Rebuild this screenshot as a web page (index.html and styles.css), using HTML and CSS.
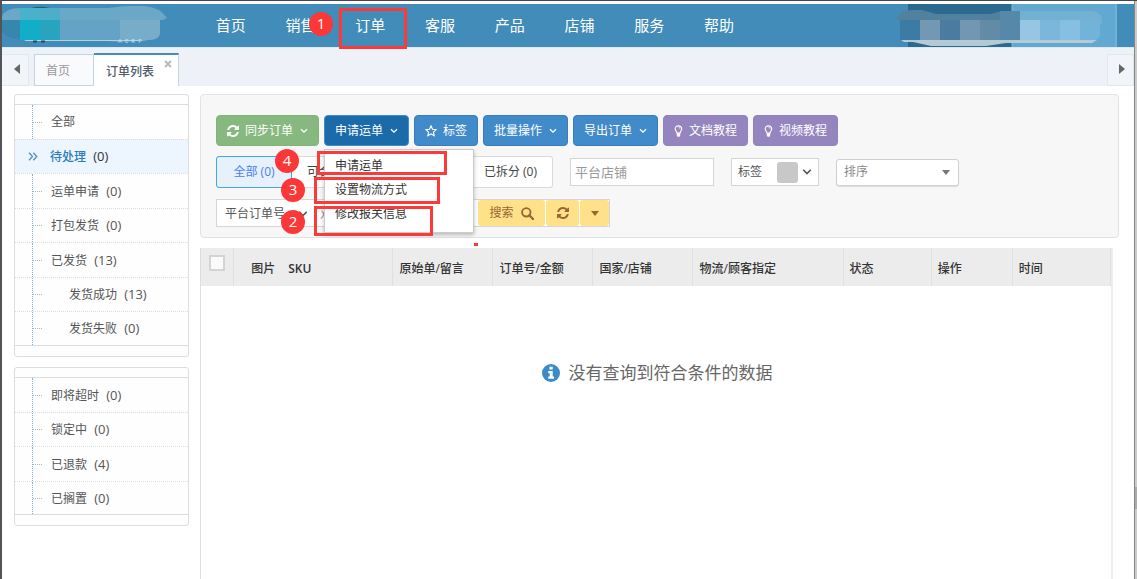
FILE: index.html
```html
<!DOCTYPE html>
<html lang="zh-CN">
<head>
<meta charset="utf-8">
<meta name="viewport" content="width=device-width, initial-scale=1">
<title>订单列表</title>
<link rel="stylesheet" href="styles.css">
</head>
<body>
<svg class="defs" aria-hidden="true">
  <symbol id="chevron" viewBox="0 0 8 6"><path d="M1 1.2 4 4.2 7 1.2" fill="none" stroke="currentColor" stroke-width="1.3"/></symbol>
  <symbol id="caret" viewBox="0 0 8 5"><path d="M0 0h8L4 5z" fill="currentColor"/></symbol>
  <symbol id="refresh" viewBox="0 0 1536 1536"><path fill="currentColor" d="M1511 928q0 5-1 7-64 268-268 434.500T764 1536q-146 0-282.500-55T238 1324l-129 129q-19 19-45 19t-45-19-19-45V960q0-26 19-45t45-19h448q26 0 45 19t19 45-19 45l-137 137q71 66 161 102t187 36q134 0 250-65t186-179q11-17 53-117 8-23 30-23h192q13 0 22.500 9.500t9.500 22.500zm25-800v448q0 26-19 45t-45 19h-448q-26 0-45-19t-19-45 19-45l138-138Q969 256 768 256q-134 0-250 65T332 500q-11 17-53 117-8 23-30 23H50q-13 0-22.500-9.500T18 608v-7q65-268 270-434.500T768 0q146 0 284 55.500T1297 212l130-129q19-19 45-19t45 19 19 45z"/></symbol>
  <symbol id="bulb" viewBox="0 0 10 14"><path d="M3.300 9.500C3.200 7.500 1.200 6.900 1.200 4.500a3.800 3.500 0 0 1 7.600 0c0 2.400-2 3-2.100 5z" fill="none" stroke="currentColor" stroke-width="1.300"/><path d="M3 9.500h4v3L6 13.700H4L3 12.500zM5 2.600c1.300 0 2 .7 2.200 1.700h-.8C6.200 3.700 5.800 3.300 5 3.300z" fill="currentColor"/></symbol>
</svg>
<div class="window">
  <header class="topbar">
    <svg class="brand" viewBox="0 0 168 43" role="img" aria-label="Logo">
      <path d="M26 5q10-4 22-1v2H26z" fill="#235d72"/>
      <path d="M0 12Q4 4 18 4h88Q125 1 142 2q16 1 23 12l-4 2H0z" fill="#6ba7c6"/>
      <path d="M0 16h20v20Q4 34 0 28z" fill="#3786ad"/>
      <path d="M18 4h20v32H18z" fill="#12aec9"/><path d="M38 4h20v32H38z" fill="#28a4bf"/>
      <path d="M18 4h40v12H18z" fill="#5cb1ca" opacity=".75"/>
      <path d="M58 16h60v20H58z" fill="#65a3c6"/><path d="M118 16h40v14q-1 6-12 6h-28z" fill="#78adc9"/>
      <path d="M22 36h124q-14 2-40 1H24z" fill="#b5d2e1"/>
      <path d="M31 37.500h4M39 37.500h4" stroke="#174f66" stroke-width="2"/>
      <text x="116" y="37.500" dy="1" class="brand-text">A  E  R  P</text>
    </svg>
    <nav class="mainnav">
      <a href="#">首页</a><a href="#">销售</a><a href="#">订单</a><a href="#">客服</a><a href="#">产品</a><a href="#">店铺</a><a href="#">服务</a><a href="#">帮助</a>
    </nav>
    <svg class="account" viewBox="0 0 238 43" aria-hidden="true">
      <path d="M12 0h104v43H12z" fill="#2b698f"/><path d="M116 0h105v43H116z" fill="#62a9d2"/>
      <path d="M116 0v43M220 0v43" stroke="#7fb9db"/>
      <path d="M0 16Q3 6 16 6h10l14 4h54l12-3h18v29H4V16z" fill="#52809f"/>
      <path d="M124 7h73q8 1 9 9v4h-82z" fill="#73b1d2"/>
      <path d="M4 16h20v20H4z" fill="#3c7ba3"/><path d="M24 16h20v20H24z" fill="#7298b4"/><path d="M44 16h20v20H44z" fill="#4b7b9f"/><path d="M64 16h20v20H64z" fill="#7397b2"/><path d="M84 16h20v20H84z" fill="#638ba5"/><path d="M104 7h20v29h-20z" fill="#5689a9"/>
      <path d="M124 16h20v20h-20z" fill="#97c6e5"/><path d="M144 16h20v20h-20z" fill="#7bb6db"/><path d="M164 16h20v20h-20z" fill="#87bfe2"/><path d="M184 16h20v14q-1 6-6 6h-14z" fill="#72b3d9"/>
      <path d="M5 36h196l-5 3h-86l-20 3H35l-18-4H8z" fill="#b3cad7"/>
    </svg>
  </header>
  <div class="tabs">
    <button class="scroller" aria-label="向左"><svg width="6" height="10" viewBox="0 0 6 10"><path d="M6 0v10L0 5z" fill="#666"/></svg></button>
    <a class="tab" href="#">首页</a>
    <a class="tab current" href="#">订单列表<svg class="close" viewBox="0 0 8 8"><path d="m1 1 6 6M7 1 1 7" stroke="#bbb" stroke-width="2"/></svg></a>
    <button class="scroller last" aria-label="向右"><svg width="6" height="10" viewBox="0 0 6 10"><path d="M0 0v10l6-5z" fill="#666"/></svg></button>
  </div>
  <div class="content">
    <aside class="sidebar">
      <ul class="tree">
        <li><a href="#">全部</a></li>
        <li class="selected"><svg class="angles" viewBox="0 0 10 9"><path d="m1 .7 3.500 3.800L1 8.300M5.300.7l3.500 3.800-3.500 3.800" fill="none" stroke="#5191bd" stroke-width="1.300"/></svg><a href="#"><b>待处理</b> <span>(0)</span></a></li>
        <li><a href="#">运单申请 <span>(0)</span></a></li>
        <li><a href="#">打包发货 <span>(0)</span></a></li>
        <li><a href="#">已发货 <span>(13)</span></a></li>
        <li class="child"><a href="#">发货成功 <span>(13)</span></a></li>
        <li class="child"><a href="#">发货失败 <span>(0)</span></a></li>
      </ul>
      <ul class="tree">
        <li><a href="#">即将超时 <span>(0)</span></a></li>
        <li><a href="#">锁定中 <span>(0)</span></a></li>
        <li><a href="#">已退款 <span>(4)</span></a></li>
        <li><a href="#">已搁置 <span>(0)</span></a></li>
      </ul>
    </aside>
    <main class="main">
      <section class="filters">
        <div class="actions">
          <button class="btn green"><svg class="i12"><use href="#refresh"/></svg>同步订单<svg class="chev"><use href="#chevron"/></svg></button>
          <div class="dropdown">
            <button class="btn pressed" aria-expanded="true">申请运单<svg class="chev"><use href="#chevron"/></svg></button>
            <ul class="menu"><li><a href="#">申请运单</a></li><li><a href="#">设置物流方式</a></li><li><a href="#">修改报关信息</a></li></ul>
          </div>
          <button class="btn"><svg class="i12" viewBox="0 0 14 14"><path d="m7 1 1.800 3.900 4.200.5-3.100 2.900.8 4.200L7 10.400l-3.700 2.100.8-4.200L1 5.400l4.200-.5z" fill="none" stroke="currentColor" stroke-width="1.300"/></svg>标签</button>
          <button class="btn">批量操作<svg class="chev"><use href="#chevron"/></svg></button>
          <button class="btn">导出订单<svg class="chev"><use href="#chevron"/></svg></button>
          <button class="btn purple"><svg class="bulb"><use href="#bulb"/></svg>文档教程</button>
          <button class="btn purple"><svg class="bulb"><use href="#bulb"/></svg>视频教程</button>
        </div>
        <div class="conditions">
          <div class="segments"><button class="on">全部 (0)</button><button class="wide">可合</button><button>已拆分 (0)</button></div>
          <input class="shop" type="text" placeholder="平台店铺" aria-label="平台店铺">
          <button class="tagpick">标签<span class="swatch"></span><svg class="chev big"><use href="#chevron"/></svg></button>
          <div class="sort"><select aria-label="排序"><option>排序</option></select><svg class="caret"><use href="#caret"/></svg></div>
        </div>
        <div class="search">
          <button class="field">平台订单号<svg class="chev big"><use href="#chevron"/></svg></button>
          <input type="text" placeholder="双" aria-label="平台订单号">
          <button class="yellow find">搜索<svg class="glass" viewBox="0 0 13 13"><circle cx="5.300" cy="5.300" r="4.200" fill="none" stroke="currentColor" stroke-width="1.900"/><path d="m8.300 8.300 3.700 3.700" stroke="currentColor" stroke-width="2.300" stroke-linecap="round"/></svg></button>
          <button class="yellow again" aria-label="刷新"><svg class="i12"><use href="#refresh"/></svg></button>
          <button class="yellow more" aria-label="更多"><svg class="caret"><use href="#caret"/></svg></button>
        </div>
      </section>
      <section class="results">
        <table>
          <colgroup><col class="c-check"><col class="c-sku"><col class="c-mid"><col class="c-mid"><col class="c-mid"><col class="c-ship"><col class="c-state"><col class="c-op"><col></colgroup>
          <thead><tr><th class="check"><input type="checkbox" aria-label="全选"></th><th class="sku"><span>图片</span><span>SKU</span></th><th>原始单/留言</th><th>订单号/金额</th><th>国家/店铺</th><th>物流/顾客指定</th><th>状态</th><th>操作</th><th>时间</th></tr></thead>
        </table>
        <p class="empty"><svg width="18" height="18" viewBox="0 0 18 18"><circle cx="9" cy="9" r="9" fill="#3b8bc8"/><path d="M7.400 2.800h3.300v2.700H7.400zM6.300 7.100h4.400v5.400H12v2.200H6.300v-2.200h1.400V9.300H6.300z" fill="#fff"/></svg>没有查询到符合条件的数据</p>
      </section>
    </main>
  </div>
</div>
<div class="edge"><div class="thumb"></div></div>
<div class="marks">
  <span class="box b1"></span><span class="num n1">1</span>
  <span class="box b4"></span><span class="num n4">4</span>
  <span class="box b3"></span><span class="num n3">3</span>
  <span class="box b2"></span><span class="num n2">2</span>
  <span class="speck"></span>
</div>
</body>
</html>
```

FILE: styles.css
```css
* { box-sizing: border-box; }
body {
  margin: 0;
  position: relative;
  display: flex;
  min-height: 100vh;
  border-left: 2px solid #545457;
  border-top: 1px solid #464450;
  background: #fff;
  color: #555;
  font: 12px/18px "Open Sans", "Noto Sans CJK SC", sans-serif;
}
button, input, select { font: inherit; color: inherit; margin: 0; }
button { cursor: pointer; }
a { color: inherit; text-decoration: none; }
ul { list-style: none; margin: 0; padding: 0; }
.defs { position: absolute; width: 0; height: 0; }
.window { flex: 1; display: flex; flex-direction: column; padding-top: 3px; min-width: 0; }
.edge { width: 3px; background: #cbcbcb; border-left: 1px solid #858585; padding-top: 486px; }
.thumb { height: 22px; background: #ababab; }

.topbar { display: flex; height: 43px; background: #418cb8; }
.brand { width: 168px; height: 43px; }
.brand-text { fill: #cfe4ef; font-size: 6px; white-space: pre; }
.mainnav { display: grid; grid-template-columns: repeat(8, 1fr); width: 558px; margin-left: 26px; }
.mainnav a { color: #fff; font-size: 15px; line-height: 43px; text-align: center; }
.account { width: 238px; height: 43px; margin-left: auto; }

.tabs { display: flex; align-items: flex-end; height: 39px; background: #eef1f7; border-top: 1px solid #dfe7f0; }
.scroller { width: 27px; height: 32px; padding: 0 0 3px 3px; border: 1px solid #e4e8ec; border-left: 0; background: #f1f4f9; }
.scroller svg { vertical-align: middle; }
.scroller.last { margin-left: auto; border-left: 1px solid #e4e8ec; }
.tab { display: flex; height: 32px; padding: 0 23px 0 11px; border: 1px solid #c4d5e8; background: #f9fafc; color: #999; line-height: 31px; margin-left: 5px; }
.tab.current { height: 33px; margin-left: 0; padding: 0 6px 0 12px; border-top: 2px solid #438eb9; border-bottom: 0; border-left: 0; background: #fff; color: #4f5b6b; font-weight: 500; line-height: 33px; }
.close { width: 8px; height: 8px; margin: 5px 0 0 10px; }

.content { flex: 1; display: flex; }
.sidebar { width: 198px; padding: 8px 11px 0 12px; }
.tree { padding: 9px 0 10px; margin-bottom: 10px; border: 1px solid #ddd; border-radius: 3px; background: #fefefe; }
.tree li { display: flex; align-items: center; height: 34px; border-top: 1px dotted #ddd; }
.tree li:nth-child(odd) { height: 35px; }
.tree li:first-child { border-top: 1px solid #ddd; }
.tree li:last-child { border-bottom: 1px solid #ddd; }
.tree li::before {
  content: "";
  width: 9px;
  height: 100%;
  margin: 0 9px 0 17px;
  border-left: 1px dotted #7eb0d5;
  background: repeating-linear-gradient(90deg, #9dbdd6 0 1px, transparent 1px 2px) 0 50% / 100% 1px no-repeat;
}
.tree .child a { padding-left: 18px; }
.tree span { margin-left: 4px; font-size: 13px; }
.tree .selected { background: #edf5fe; }
.tree .selected::before { display: none; }
.tree .selected b { color: #2b7dbc; font-weight: 500; }
.tree .selected a { color: #333; font-weight: 500; }
.angles { width: 10px; height: 9px; margin: 0 12px 0 13px; }

.main { flex: 1; display: flex; flex-direction: column; min-width: 0; padding-top: 8px; }
.filters { display: flex; flex-direction: column; gap: 10px; margin-right: 15px; padding: 20px 15px 10px; border: 1px solid #e3e3e3; border-radius: 4px; background: #f7f7f7; }
.actions { display: flex; gap: 5px; }
.btn { display: flex; align-items: center; height: 31px; padding: 0 10px; border: 1px solid #3b7dbb; border-radius: 4px; background: #428bca; color: #fff; white-space: nowrap; }
.btn.green { background: #87b87f; border-color: #82b279; }
.btn.pressed { background: #1b6aaa; border-color: #428bca; }
.btn.purple { background: #9585bf; border-color: #9283bd; }
.i12 { width: 12px; height: 12px; margin-right: 6px; }
.bulb { width: 9px; height: 12px; margin-right: 6px; }
.chev { width: 8px; height: 6px; margin-left: 7px; }
.chev.big { width: 10px; height: 8px; margin-left: 4px; }
.dropdown { position: relative; }
.menu { position: absolute; z-index: 2; top: 34px; left: 0; width: 150px; padding: 4px 0 6px; background: #fff; border: 1px solid #ccc; box-shadow: 0 2px 4px rgba(0,0,0,.25); }
.menu a { display: block; padding: 0 10px; line-height: 24px; color: #333; }

.conditions { display: flex; align-items: center; gap: 17px; }
.segments { display: flex; width: 337px; height: 32px; }
.segments button { border: 1px solid #d9d9d9; border-left: 0; background: #fff; color: #444; padding: 0 15px; white-space: nowrap; }
.segments .on { width: 76px; padding: 0; border: 1px solid #46a0fc; border-radius: 3px 0 0 3px; background: #e6f1fc; color: #4a7dfa; }
.segments .wide { flex: 1; text-align: left; }
.segments button:last-child { border-radius: 0 3px 3px 0; }
.shop { width: 144px; height: 28px; padding: 0 4px; border: 1px solid #d5d5d5; background: #fff; font-size: 13px; }
input::placeholder { color: #999; opacity: 1; }
.tagpick { display: flex; align-items: center; width: 88px; height: 28px; padding: 0 6px; border: 1px solid #d5d5d5; background: #fff; }
.swatch { width: 21px; height: 21px; margin-left: 15px; border-radius: 3px; background: #c8c8c8; }
.sort { display: grid; width: 123px; height: 27px; align-items: center; }
.sort select, .sort .caret { grid-area: 1 / 1; }
.sort select { height: 100%; appearance: none; padding: 0 7px; border: 1px solid #d0d0d0; border-radius: 3px; background: #fff; color: #888; box-shadow: 0 1px 1px rgba(0,0,0,.1); }
.caret { width: 8px; height: 5px; }
.sort .caret { justify-self: end; margin-right: 9px; color: #777; pointer-events: none; }

.search { display: flex; gap: 1px; width: 394px; height: 28px; margin-top: 1px; border: 1px solid #d5d5d5; background: #fff; }
.search .field { display: flex; align-items: center; width: 98px; padding: 2px 0 0 8px; border: 0; background: none; white-space: nowrap; }
.search .field .chev { margin-left: 13px; flex: none; }
.search input { flex: 1; min-width: 0; padding: 2px 0 0 4px; border: 0; background: none; }
.yellow { display: flex; align-items: center; justify-content: center; border: 0; border-radius: 3px; background: #fee188; color: #996633; }
.yellow .i12 { margin: 0; }
.find { width: 67px; gap: 7px; }
.again { width: 33px; }
.more { width: 29px; }
.glass { width: 13px; height: 13px; }

.results { flex: 1; margin: 10px 21px 0 0; border-left: 1px solid #ddd; border-right: 2px solid #ececec; }
table { width: 100%; table-layout: fixed; border-collapse: collapse; background: #ececec; }
th { height: 38px; padding: 3px 0 0 6px; border-right: 1px solid #e0e0e0; color: #333; font-weight: 500; text-align: left; white-space: nowrap; }
.check { vertical-align: top; padding: 7px 0 0 8px; }
.check input { appearance: none; display: block; width: 16px; height: 16px; border: 2px solid #d4d4d4; background: #fafafa; }
.sku { padding-left: 17px; }
.sku span + span { margin-left: 13px; font-weight: 600; }
.c-check { width: 3.600%; }
.c-sku { width: 17.500%; }
.c-mid { width: 11%; }
.c-ship { width: 16.500%; }
.c-state { width: 9.700%; }
.c-op { width: 8.900%; }
.empty { display: flex; align-items: center; justify-content: center; gap: 9px; margin: 73px 0 0 2px; font-size: 17px; line-height: 28px; color: #666; }

.marks { position: absolute; inset: 0; z-index: 5; pointer-events: none; }
.box { position: absolute; border: 3px solid #fc3a3a; }
.b1 { left: 337px; top: 7px; width: 68px; height: 41px; }
.b4 { left: 315px; top: 150px; width: 130px; height: 24px; }
.b3 { left: 312px; top: 176px; width: 126px; height: 27px; }
.b2 { left: 312px; top: 205px; width: 119px; height: 30px; }
.num { position: absolute; width: 24px; height: 24px; border-radius: 50%; background: #fb3737; color: #fff; font-size: 15px; line-height: 23px; text-align: center; }
.n1 { left: 307px; top: 11px; }
.n4 { left: 273px; top: 148px; }
.n3 { left: 279px; top: 177px; }
.n2 { left: 279px; top: 209px; }
.speck { position: absolute; left: 472px; top: 242px; width: 4px; height: 3px; background: #fb3737; }
```
